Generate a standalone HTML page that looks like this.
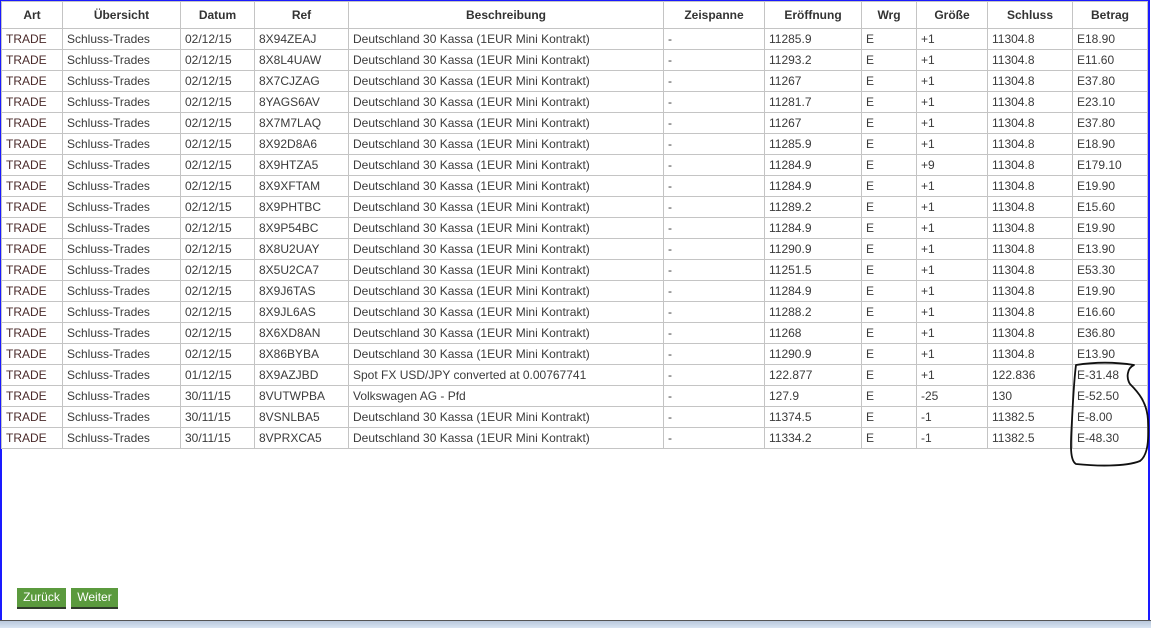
<!DOCTYPE html>
<html><head><meta charset="utf-8"><style>
html,body{margin:0;padding:0;width:1151px;height:628px;overflow:hidden;background:#fff;position:relative}
body{font-family:"Liberation Sans",Arial,sans-serif;font-size:12px;color:#3a3a3a}
.frame{position:absolute;left:0;top:0;width:1150px;height:620px;border-left:2px solid #1a1aff;border-right:2px solid #1a1aff;border-top:2px solid #1a1aff;box-sizing:border-box}
table{position:absolute;left:1px;top:1px;border-collapse:collapse;table-layout:fixed;width:1146px}
td,th{border:1px solid #c4c4c4;padding:0 0 0 4px;height:20px;white-space:nowrap;overflow:hidden;text-align:left;font-weight:normal}
th{height:26px;text-align:center;font-weight:bold;padding:0;color:#333}
td:first-child{color:#4a2a2a}
.btn{position:absolute;top:588px;height:19px;background:#5b9a3e;color:#fff;font-size:12px;line-height:19px;text-align:center;border-bottom:2px solid #2f3a2a}
.bar{position:absolute;left:0;top:620px;width:1151px;height:8px;background:linear-gradient(#b9c8dc,#dce8f6);border-top:1px solid #555}
</style></head><body>
<div class="frame"></div>
<table>
<colgroup><col style="width:61px"><col style="width:118px"><col style="width:74px"><col style="width:94px"><col style="width:315px"><col style="width:101px"><col style="width:97px"><col style="width:55px"><col style="width:71px"><col style="width:85px"><col style="width:75px"></colgroup>
<tr><th>Art</th><th>Übersicht</th><th>Datum</th><th>Ref</th><th>Beschreibung</th><th>Zeispanne</th><th>Eröffnung</th><th>Wrg</th><th>Größe</th><th>Schluss</th><th>Betrag</th></tr>
<tr><td>TRADE</td><td>Schluss-Trades</td><td>02/12/15</td><td>8X94ZEAJ</td><td>Deutschland 30 Kassa (1EUR Mini Kontrakt)</td><td>-</td><td>11285.9</td><td>E</td><td>+1</td><td>11304.8</td><td>E18.90</td></tr>
<tr><td>TRADE</td><td>Schluss-Trades</td><td>02/12/15</td><td>8X8L4UAW</td><td>Deutschland 30 Kassa (1EUR Mini Kontrakt)</td><td>-</td><td>11293.2</td><td>E</td><td>+1</td><td>11304.8</td><td>E11.60</td></tr>
<tr><td>TRADE</td><td>Schluss-Trades</td><td>02/12/15</td><td>8X7CJZAG</td><td>Deutschland 30 Kassa (1EUR Mini Kontrakt)</td><td>-</td><td>11267</td><td>E</td><td>+1</td><td>11304.8</td><td>E37.80</td></tr>
<tr><td>TRADE</td><td>Schluss-Trades</td><td>02/12/15</td><td>8YAGS6AV</td><td>Deutschland 30 Kassa (1EUR Mini Kontrakt)</td><td>-</td><td>11281.7</td><td>E</td><td>+1</td><td>11304.8</td><td>E23.10</td></tr>
<tr><td>TRADE</td><td>Schluss-Trades</td><td>02/12/15</td><td>8X7M7LAQ</td><td>Deutschland 30 Kassa (1EUR Mini Kontrakt)</td><td>-</td><td>11267</td><td>E</td><td>+1</td><td>11304.8</td><td>E37.80</td></tr>
<tr><td>TRADE</td><td>Schluss-Trades</td><td>02/12/15</td><td>8X92D8A6</td><td>Deutschland 30 Kassa (1EUR Mini Kontrakt)</td><td>-</td><td>11285.9</td><td>E</td><td>+1</td><td>11304.8</td><td>E18.90</td></tr>
<tr><td>TRADE</td><td>Schluss-Trades</td><td>02/12/15</td><td>8X9HTZA5</td><td>Deutschland 30 Kassa (1EUR Mini Kontrakt)</td><td>-</td><td>11284.9</td><td>E</td><td>+9</td><td>11304.8</td><td>E179.10</td></tr>
<tr><td>TRADE</td><td>Schluss-Trades</td><td>02/12/15</td><td>8X9XFTAM</td><td>Deutschland 30 Kassa (1EUR Mini Kontrakt)</td><td>-</td><td>11284.9</td><td>E</td><td>+1</td><td>11304.8</td><td>E19.90</td></tr>
<tr><td>TRADE</td><td>Schluss-Trades</td><td>02/12/15</td><td>8X9PHTBC</td><td>Deutschland 30 Kassa (1EUR Mini Kontrakt)</td><td>-</td><td>11289.2</td><td>E</td><td>+1</td><td>11304.8</td><td>E15.60</td></tr>
<tr><td>TRADE</td><td>Schluss-Trades</td><td>02/12/15</td><td>8X9P54BC</td><td>Deutschland 30 Kassa (1EUR Mini Kontrakt)</td><td>-</td><td>11284.9</td><td>E</td><td>+1</td><td>11304.8</td><td>E19.90</td></tr>
<tr><td>TRADE</td><td>Schluss-Trades</td><td>02/12/15</td><td>8X8U2UAY</td><td>Deutschland 30 Kassa (1EUR Mini Kontrakt)</td><td>-</td><td>11290.9</td><td>E</td><td>+1</td><td>11304.8</td><td>E13.90</td></tr>
<tr><td>TRADE</td><td>Schluss-Trades</td><td>02/12/15</td><td>8X5U2CA7</td><td>Deutschland 30 Kassa (1EUR Mini Kontrakt)</td><td>-</td><td>11251.5</td><td>E</td><td>+1</td><td>11304.8</td><td>E53.30</td></tr>
<tr><td>TRADE</td><td>Schluss-Trades</td><td>02/12/15</td><td>8X9J6TAS</td><td>Deutschland 30 Kassa (1EUR Mini Kontrakt)</td><td>-</td><td>11284.9</td><td>E</td><td>+1</td><td>11304.8</td><td>E19.90</td></tr>
<tr><td>TRADE</td><td>Schluss-Trades</td><td>02/12/15</td><td>8X9JL6AS</td><td>Deutschland 30 Kassa (1EUR Mini Kontrakt)</td><td>-</td><td>11288.2</td><td>E</td><td>+1</td><td>11304.8</td><td>E16.60</td></tr>
<tr><td>TRADE</td><td>Schluss-Trades</td><td>02/12/15</td><td>8X6XD8AN</td><td>Deutschland 30 Kassa (1EUR Mini Kontrakt)</td><td>-</td><td>11268</td><td>E</td><td>+1</td><td>11304.8</td><td>E36.80</td></tr>
<tr><td>TRADE</td><td>Schluss-Trades</td><td>02/12/15</td><td>8X86BYBA</td><td>Deutschland 30 Kassa (1EUR Mini Kontrakt)</td><td>-</td><td>11290.9</td><td>E</td><td>+1</td><td>11304.8</td><td>E13.90</td></tr>
<tr><td>TRADE</td><td>Schluss-Trades</td><td>01/12/15</td><td>8X9AZJBD</td><td>Spot FX USD/JPY converted at 0.00767741</td><td>-</td><td>122.877</td><td>E</td><td>+1</td><td>122.836</td><td>E-31.48</td></tr>
<tr><td>TRADE</td><td>Schluss-Trades</td><td>30/11/15</td><td>8VUTWPBA</td><td>Volkswagen AG - Pfd</td><td>-</td><td>127.9</td><td>E</td><td>-25</td><td>130</td><td>E-52.50</td></tr>
<tr><td>TRADE</td><td>Schluss-Trades</td><td>30/11/15</td><td>8VSNLBA5</td><td>Deutschland 30 Kassa (1EUR Mini Kontrakt)</td><td>-</td><td>11374.5</td><td>E</td><td>-1</td><td>11382.5</td><td>E-8.00</td></tr>
<tr><td>TRADE</td><td>Schluss-Trades</td><td>30/11/15</td><td>8VPRXCA5</td><td>Deutschland 30 Kassa (1EUR Mini Kontrakt)</td><td>-</td><td>11334.2</td><td>E</td><td>-1</td><td>11382.5</td><td>E-48.30</td></tr>
</table>
<svg style="position:absolute;left:0;top:0" width="1151" height="628"><path d="M1076,365 C1095,362 1115,362 1134,365 C1127,368 1126,378 1130,384 C1138,392 1147,402 1148,420 C1149,440 1148,455 1140,461 C1125,467 1095,466 1076,464 C1069,460 1071,440 1072,420 C1073,400 1074,380 1076,365 Z" fill="none" stroke="#111" stroke-width="1.8" stroke-linejoin="round"/></svg>
<div class="btn" style="left:17px;width:49px">Zurück</div>
<div class="btn" style="left:71px;width:47px">Weiter</div>
<div class="bar"></div>
</body></html>
